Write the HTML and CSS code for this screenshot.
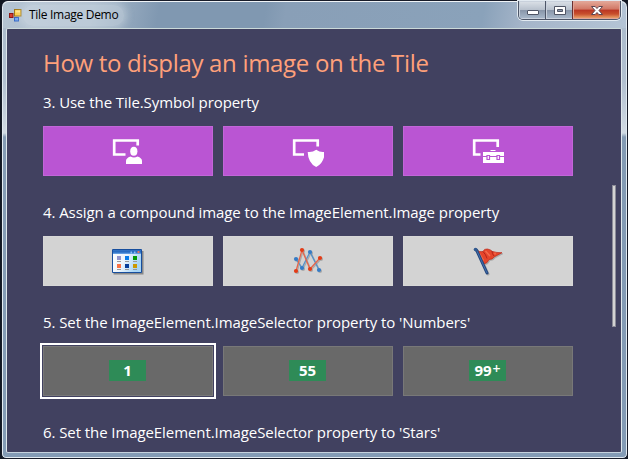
FILE: index.html
```
<!DOCTYPE html>
<html lang="en">
<head>
<meta charset="utf-8">
<title>Tile Image Demo</title>
<link rel="stylesheet" href="styles.css">
</head>
<body>
<div class="window">
  <header class="titlebar">
    <svg class="app-icon" width="13" height="13" viewBox="0 0 13 13">
      <rect x="5.5" y=".5" width="6.5" height="6.500" fill="#fbd04b" stroke="#a17918"/>
      <path d="M6.500 1.500h4.500v2h-4.500z" fill="#ffe58c"/>
      <rect x=".5" y="4.500" width="3.500" height="4" fill="#d8402e" stroke="#8d1614"/>
      <rect x="5.500" y="8.500" width="4" height="3.500" fill="#74a7f2" stroke="#3668c5"/>
    </svg>
    <span class="caption">Tile Image Demo</span>
    <div class="controls">
      <div class="control minimize"><svg width="14" height="12" viewBox="0 0 14 12"><rect x="1.500" y="5.500" width="11" height="4" rx=".5" fill="#fff" stroke="#4f5565"/></svg></div>
      <div class="control maximize"><svg width="14" height="12" viewBox="0 0 14 12"><path fill-rule="evenodd" d="M1.500 1.500h11v8h-11zM4.500 4.500h5v2h-5z" fill="#fff" stroke="#4f5565"/></svg></div>
      <div class="control close"><svg width="14" height="12" viewBox="0 0 14 12"><path d="M1.500 1.500h3.700l1.800 2 1.800-2h3.700l-3.500 4 3.500 4h-3.700l-1.800-2-1.800 2H1.500l3.500-4z" fill="#fff" stroke="#5c4550"/></svg></div>
    </div>
  </header>
  <main class="content">
    <h1 class="heading">How to display an image on the Tile</h1>
    <section class="group">
      <h2 class="label">3. Use the Tile.Symbol property</h2>
      <div class="tiles">
        <div class="tile orchid"><svg width="32" height="32" viewBox="0 0 32 32"><path d="M13.500 19.500H2.200v-14h23.500v5" fill="none" stroke="#fff" stroke-width="2.700"/><ellipse cx="21.800" cy="16.200" rx="3.600" ry="4.500" fill="#fff"/><path d="M14 29v-3q0-3 4.500-4.500 3.500 2.200 7 0 4.500 1.500 4.500 4.500v3z" fill="#fff"/></svg></div>
        <div class="tile orchid"><svg width="32" height="32" viewBox="0 0 32 32"><path d="M12 19.500H2.200v-14h23.500v6" fill="none" stroke="#fff" stroke-width="2.700"/><path d="M24.200 14.700q4 3 8.500 2.200-.3 11-8.500 15-8.200-4-8.500-15 4.500.8 8.500-2.200z" fill="#fff"/></svg></div>
        <div class="tile orchid"><svg width="32" height="32" viewBox="0 0 32 32"><path d="M8.500 19.500H2.200v-14h23.500v6.500" fill="none" stroke="#fff" stroke-width="2.700"/><path d="M11 17h21v11H11z" fill="#fff"/><path d="M18.500 15.500h5" stroke="#fff" stroke-width="1.200"/><path d="M11 21.500h21" stroke="#ba55d3"/><path d="M15 20.500h2.500v4H15zM25 20.500h2.500v4H25z" fill="#fff" stroke="#ba55d3" stroke-width="1.200"/></svg></div>
      </div>
    </section>
    <section class="group">
      <h2 class="label">4. Assign a compound image to the ImageElement.Image property</h2>
      <div class="tiles">
        <div class="tile silver"><svg width="32" height="32" viewBox="0 0 32 32">
          <defs>
            <linearGradient id="page" x2="1" y2=".4"><stop stop-color="#fff"/><stop offset=".5" stop-color="#edf5fc"/><stop offset="1" stop-color="#a6d4f5"/></linearGradient>
            <linearGradient id="bar" x2="0" y2="1"><stop stop-color="#3674c4"/><stop offset=".5" stop-color="#2268c0"/><stop offset="1" stop-color="#76ade9"/></linearGradient>
          </defs>
          <path d="M1.500 6h30v23.500h-30z" fill="#777" opacity=".8"/>
          <path d="M.5 4.500h29v23H.5z" fill="url(#page)" stroke="#174e9d"/><path d="M1 5h28v4H1z" fill="url(#bar)"/>
          <path d="M18.500 6.500H20v2h-1.500zM22 6.500h1.500v2H22z" fill="#8cc0f5"/><path d="M25.500 6h2v2h-2z" fill="#e77761"/>
          <path d="M5 11h4v4H5z" fill="#9295ce"/><path d="M13 11h4v4h-4z" fill="#087cea"/><path d="M21 11h4v4h-4z" fill="#049a05"/><path d="M5 19h4v4H5z" fill="#fa7244"/><path d="M13 19h4v4h-4z" fill="#063d99"/><path d="M21 19h4v4h-4z" fill="#cc9900"/>
          <path d="M5 16.500h4m4 0h4m4 0h4M5 24.500h4m4 0h4m4 0h4" stroke="#999"/>
        </svg></div>
        <div class="tile silver"><svg width="32" height="32" viewBox="0 0 32 32">
          <g class="chart"><path d="M4 14l6 9L18 7l9 18" fill="none" stroke="#5591c8" stroke-width="1.300"/><g fill="#347bc6"><circle cx="4" cy="14" r="2.100"/><circle cx="10" cy="23" r="2.100"/><circle cx="18" cy="7" r="2.100"/><circle cx="27" cy="25" r="2.100"/></g>
          <path d="M4 26L10 5l8 19L28 13" fill="none" stroke="#e4654b" stroke-width="1.300"/><g fill="#e33b16"><circle cx="4" cy="26" r="2.100"/><circle cx="10" cy="5" r="2.100"/><circle cx="18" cy="24" r="2.100"/><circle cx="28" cy="13" r="2.100"/></g></g>
        </svg></div>
        <div class="tile silver"><svg width="32" height="32" viewBox="0 0 32 32">
          <g class="flag" transform="translate(0 1)"><path d="M4.500 4q3 2.500 6.500 1.500 1-3 4.500-2.500 3 .5 5 2.500 4 1.300 9.500 1.200L22 11q-1 2.500-5 2.500-1.500 4-5.500 4.500z" fill="#e5452b" stroke="#bd2819" stroke-width=".7"/><path d="M11 5.500q3 3 4 7M20 5q0 3 2 5" fill="none" stroke="#b4241b"/><path d="M13.500 5l4.500 5M7.500 7.500l4 7M23 6.500v2" stroke="#f36b4c" stroke-width="1.500"/><path d="M4.500 4L15 27" stroke="#24477d" stroke-width="3" stroke-linecap="round"/><path d="M4.500 4L15 27" stroke="#426fad"/><circle cx="3.500" cy="3.500" r="1.800" fill="#31598f"/></g>
        </svg></div>
      </div>
    </section>
    <section class="group">
      <h2 class="label">5. Set the ImageElement.ImageSelector property to 'Numbers'</h2>
      <div class="tiles">
        <div class="tile gray selected"><span class="number">1</span></div>
        <div class="tile gray"><span class="number">55</span></div>
        <div class="tile gray"><span class="number">99<span class="plus">+</span></span></div>
      </div>
    </section>
    <section class="group">
      <h2 class="label">6. Set the ImageElement.ImageSelector property to 'Stars'</h2>
    </section>
    <div class="scroll-thumb"></div>
  </main>
</div>
</body>
</html>
```
FILE: styles.css
```
* { box-sizing: border-box; }
body {
  margin: 0;
  width: 628px;
  height: 459px;
  overflow: hidden;
  background: #111722;
  font-family: "Open Sans", "Noto Sans", sans-serif;
}
.window {
  height: 459px;
  margin-left: 1px;
  padding: 0 5px 4px 4px;
  border: 1px solid #171b28;
  border-radius: 7px 7px 5px 5px;
  background: linear-gradient(180deg, #a9b9ca 0, #b2c0d0 80px, #d1dae3 132px, #849bb4 136px, #839bb5 100%);
  box-shadow: inset 0 0 0 1px #e2eaf1;
}
.titlebar {
  display: flex;
  align-items: flex-start;
  height: 27px;
  margin: 0 -4px 0 -3px;
  padding: 0 5px 0 6px;
  border-top: 1px solid #f0f4f7;
  border-radius: 6px 6px 0 0;
  background: linear-gradient(100deg, #b5c4d3 0, #a9bacb 90px, #8098b1 155px, #8098b1 260px, #899fb7 280px, #8aa2ba 475px, #a5b5c9 515px, #b4c4d5 100%);
}
.app-icon { margin-top: 7px; }
.caption {
  height: 21px;
  margin: 3px 0 0 1px;
  padding: 0 6px;
  font-size: 12px;
  line-height: 20px;
  letter-spacing: -.3px;
  color: #000;
  border-radius: 10px;
  background: rgba(224, 232, 239, .35);
  box-shadow: 0 0 7px 3px rgba(224, 232, 239, .35);
}
.controls {
  display: flex;
  height: 19px;
  margin: -1px 0 0 auto;
  border: 1px solid #4d5668;
  border-top: 0;
  border-radius: 0 0 5px 5px;
  overflow: hidden;
  box-shadow: 0 0 0 1px #e2eaf1;
}
.control {
  display: flex;
  align-items: center;
  justify-content: center;
  padding-top: 1px;
  border: 1px solid #c9d1dc;
  background: linear-gradient(#d8dee5 0, #b8c1cd 48%, #8795a8 50%, #a6b6c8 100%);
}
.minimize { width: 27px; }
.maximize { width: 27px; box-shadow: -1px 0 #4d5668; }
.close {
  width: 47px;
  border-color: #e1a497;
  background: linear-gradient(#e2a494 0, #d17765 45%, #b93523 50%, #c84f2c 75%, #e7a068 100%);
  box-shadow: -1px 0 #6b3030;
}
.content {
  position: relative;
  height: 425px;
  padding: 18px 36px 0;
  overflow: hidden;
  border: 1px solid #c6d2dc;
  border-color: #cbdad9 #dde6eb #c5d1dd;
  border-radius: 2px;
  background: #414160;
}
.heading, .label { margin: 0; font-weight: 400; white-space: nowrap; }
.heading {
  height: 44px;
  font-size: 24px;
  line-height: 31px;
  letter-spacing: -.31px;
  color: #ffa07a;
}
.group { height: 110px; }
.label {
  height: 35px;
  font-size: 15px;
  line-height: 22px;
  letter-spacing: -.08px;
  color: #fff;
}
.tiles { display: grid; grid-template-columns: repeat(3, 170px); gap: 10px; }
.tile {
  display: flex;
  align-items: center;
  justify-content: center;
  height: 50px;
  border: 1px solid;
}
.orchid { background: #ba55d3; border-color: #c266d8; }
.silver { background: #d3d3d3; border-color: #d7d7d7; }
.gray { background: #696969; border-color: #787878; }
.selected { outline: 2px solid #fff; outline-offset: 1px; }
.chart, .flag { filter: drop-shadow(1px 1px .5px rgba(0, 0, 0, .2)); }
.number {
  display: flex;
  justify-content: center;
  width: 37px;
  height: 21px;
  margin: -1px 1px 0 0;
  background: #2e8b57;
  font-size: 15px;
  line-height: 21px;
  font-weight: 700;
  color: #fff;
}
.plus { margin-left: 1px; font-size: 14px; line-height: 17px; font-weight: 600; }
.scroll-thumb {
  position: absolute;
  right: 5px;
  top: 156px;
  width: 4px;
  height: 142px;
  border: 1px solid #8c8c98;
  background: #d3d3d3;
}
```
